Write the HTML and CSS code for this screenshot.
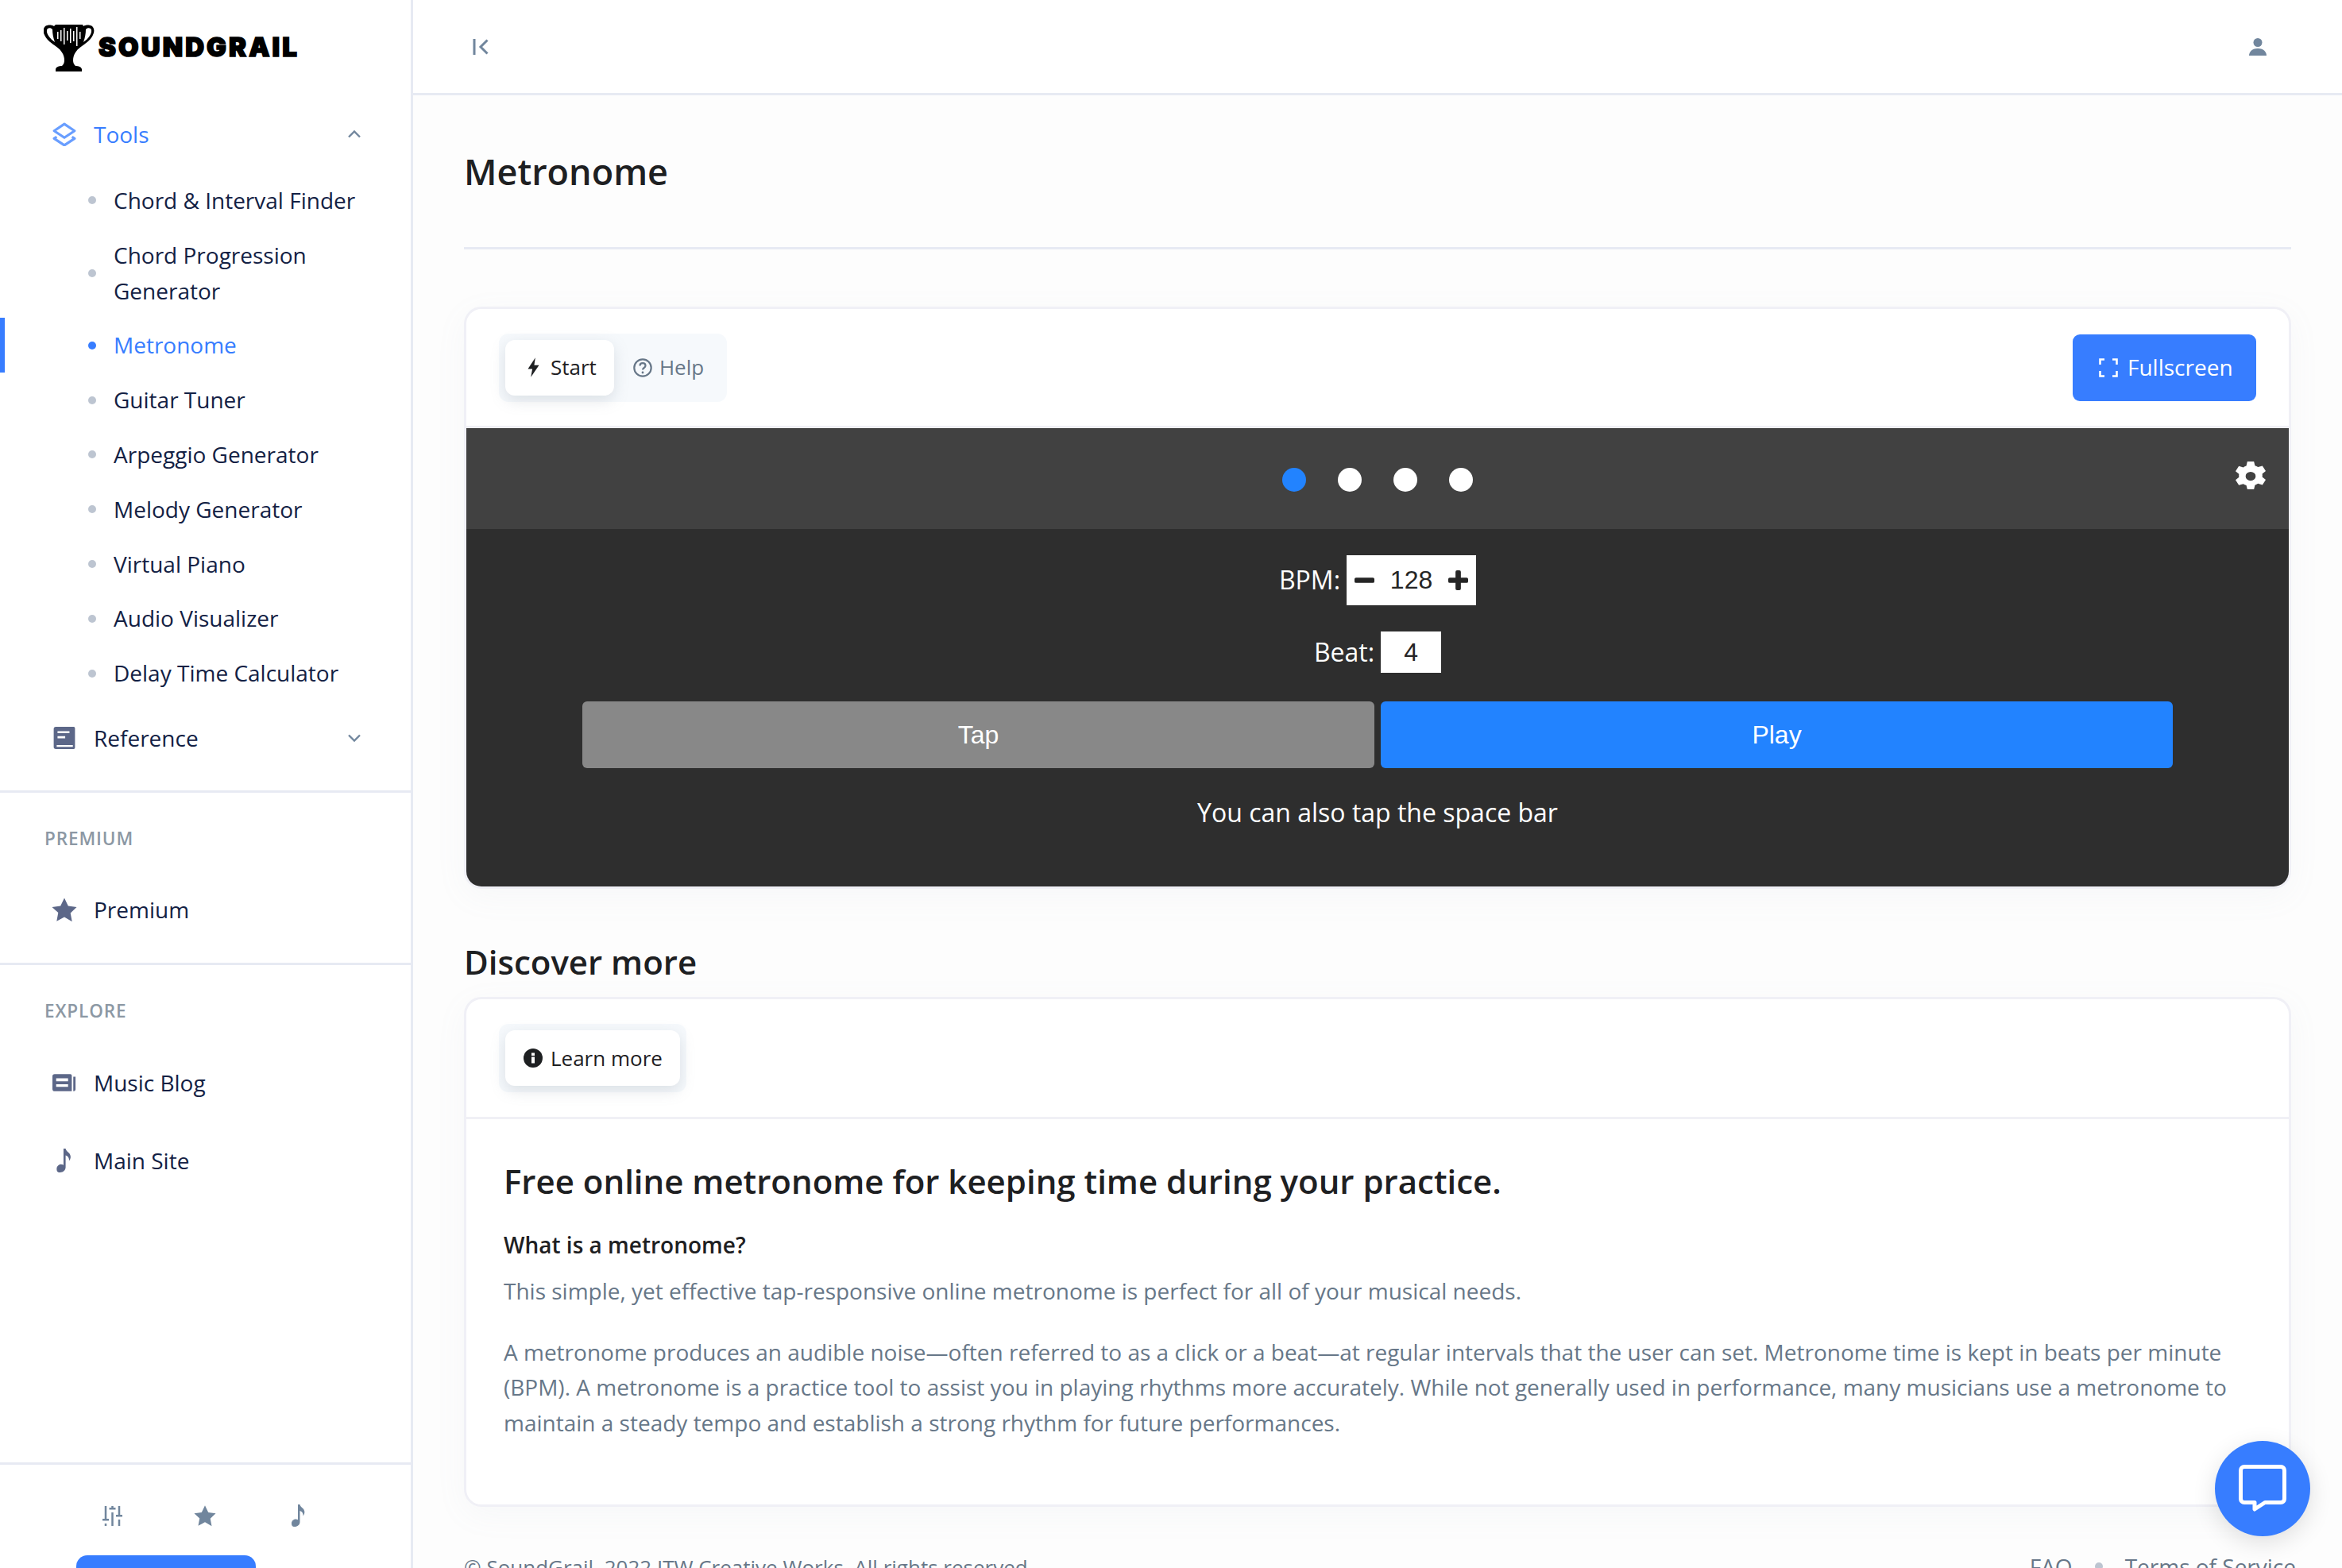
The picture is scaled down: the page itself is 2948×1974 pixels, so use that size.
FILE: index.html
```html
<!DOCTYPE html>
<html lang="en">
<head>
<meta charset="utf-8">
<title>Metronome</title>
<link rel="stylesheet" href="styles.css">
</head>
<body>
<div class="app">
  <aside class="sidebar">
    <div class="brand">
      <svg class="trophy" viewBox="0 0 64 60" aria-hidden="true">
        <path fill="#000" d="M15 1h34l1 2c3-2 8-2 11 0 3 3 3 7 1 11-2 5-7 9-11 12-3 2-8 5-11 10-2 3-3 6-3 10 0 3 1 5 3 7 4 0 7 1 8 4v3H15v-3c1-3 4-4 8-4 2-2 3-4 3-7 0-4-1-7-3-10-3-5-8-8-11-10C8 23 3 19 1 14-1 10-1 6 2 3c3-2 8-2 11 0zM5 6c-2 2-1 6 1 9 2 3 5 6 8 8-2-5-3-11-3-16-2-2-4-2-6-1zm54 0c-2-1-4-1-6 1 0 5-1 11-3 16 3-2 6-5 8-8 2-3 3-7 1-9z"/>
        <g fill="#fff"><rect x="17" y="10" width="1.5" height="9"/><rect x="21" y="8" width="1.5" height="14"/><rect x="25" y="5" width="1.5" height="21"/><rect x="29" y="9" width="1.5" height="12"/><rect x="33" y="6" width="1.5" height="18"/><rect x="37" y="9" width="1.5" height="13"/><rect x="41" y="4" width="1.5" height="24"/><rect x="45" y="10" width="1.5" height="9"/></g>
      </svg>
      <span class="wordmark">SOUNDGRAIL</span>
    </div>

    <nav class="nav-main">
      <a class="nav-item is-open">
        <svg class="nav-icon" viewBox="0 0 28 28" aria-hidden="true"><path fill="none" stroke="#377dff" stroke-opacity=".75" stroke-width="3" stroke-linejoin="round" d="M14 2 26 10 14 18 2 10z"/><path fill="none" stroke="#377dff" stroke-opacity=".75" stroke-width="3" stroke-linejoin="round" d="M5 17 2 19l12 8 12-8-3-2"/></svg>
        <span class="nav-label">Tools</span>
        <svg class="chev" viewBox="0 0 16 10" aria-hidden="true"><path fill="none" stroke="#71869d" stroke-width="2.4" d="M1 8.500l7-7 7 7"/></svg>
      </a>
      <ul class="sublist">
        <li class="sub-item">Chord &amp; Interval Finder</li>
        <li class="sub-item">Chord Progression<br>Generator</li>
        <li class="sub-item is-active">Metronome</li>
        <li class="sub-item">Guitar Tuner</li>
        <li class="sub-item">Arpeggio Generator</li>
        <li class="sub-item">Melody Generator</li>
        <li class="sub-item">Virtual Piano</li>
        <li class="sub-item">Audio Visualizer</li>
        <li class="sub-item">Delay Time Calculator</li>
      </ul>
      <a class="nav-item nav-ref">
        <svg class="nav-icon" viewBox="0 0 28 28" aria-hidden="true"><path fill="#5c6788" d="M4 1h21a1.500 1.500 0 0 1 1.500 1.500v23a1.500 1.500 0 0 1-1.500 1.500H4a2.500 2.500 0 0 1-2.500-2.500v-21A2.500 2.500 0 0 1 4 1z"/><path fill="#fff" d="M6 6h14v2.500H6zM6 12h9v2.500H6zM5 22.500h19V24.500H5z"/></svg>
        <span class="nav-label">Reference</span>
        <svg class="chev" viewBox="0 0 16 10" aria-hidden="true"><path fill="none" stroke="#71869d" stroke-width="2.4" d="M1 1.500l7 7 7-7"/></svg>
      </a>
    </nav>

    <section class="nav-section">
      <h3 class="nav-heading">PREMIUM</h3>
      <a class="nav-item">
        <svg class="nav-icon" viewBox="0 0 32 30" aria-hidden="true"><path fill="#5c6788" d="M16 .5l4.800 10 10.700 1.400-7.800 7.500 2 10.800L16 24.500 6.300 29.700l2-10.800L.5 11.900l10.700-1.400z"/></svg>
        <span class="nav-label">Premium</span>
      </a>
    </section>

    <section class="nav-section nav-section-last">
      <h3 class="nav-heading">EXPLORE</h3>
      <a class="nav-item">
        <svg class="nav-icon icon-blog" viewBox="0 0 32 24" aria-hidden="true"><path fill="#5c6788" d="M3 .5h21a2 2 0 0 1 2 2v21H3a3 3 0 0 1-3-3V3.500a3 3 0 0 1 3-3zM28 4h3v17a2.500 2.500 0 0 1-2.500 2.500H28z"/><path fill="#fff" d="M5 6h16v4H5zM5 14h16v3.500H5z"/></svg>
        <span class="nav-label">Music Blog</span>
      </a>
      <a class="nav-item">
        <svg class="nav-icon" viewBox="0 0 28 28" aria-hidden="true"><path fill="#5c6788" d="M13 0h2.500c.5 3 3.500 4 5 6.500 1.500 2.500 1 6-1 8 .5-3-1-5.500-4-6.500v14c0 3.500-3 6-6.500 6S5 26 5 23.500 7.500 18.500 10 18.500c1.200 0 2.300.3 3 .8z"/></svg>
        <span class="nav-label">Main Site</span>
      </a>
    </section>

    <div class="side-foot">
      <div class="foot-icons">
        <svg class="foot-icon foot-sliders" viewBox="0 0 25 25" aria-hidden="true"><g fill="#71869d"><rect x="2.750" y="0" width="2.500" height="16"/><rect x="0" y="16" width="8" height="2.500"/><rect x="2.750" y="22" width="2.500" height="3"/><rect x="11.250" y="0" width="2.500" height="2"/><rect x="8.500" y="2" width="8" height="2.500"/><rect x="11.250" y="8" width="2.500" height="17"/><rect x="19.750" y="0" width="2.500" height="11"/><rect x="17" y="11" width="8" height="2.500"/><rect x="19.750" y="17" width="2.500" height="8"/></g></svg>
        <svg class="foot-icon" viewBox="0 0 32 30" aria-hidden="true"><path fill="#71869d" d="M16 .5l4.800 10 10.700 1.400-7.800 7.500 2 10.800L16 24.500 6.300 29.700l2-10.800L.5 11.900l10.700-1.400z"/></svg>
        <svg class="foot-icon" viewBox="0 0 28 28" aria-hidden="true"><path fill="#71869d" d="M13 0h2.500c.5 3 3.500 4 5 6.500 1.500 2.500 1 6-1 8 .5-3-1-5.500-4-6.500v14c0 3.500-3 6-6.500 6S5 26 5 23.500 7.500 18.500 10 18.500c1.200 0 2.300.3 3 .8z"/></svg>
      </div>
      <div class="foot-btn"></div>
    </div>
  </aside>

  <div class="main">
    <header class="topbar">
      <svg class="collapse" viewBox="0 0 20 20" aria-hidden="true"><path fill="none" stroke="#71869d" stroke-width="3" d="M2 0v20M18.500 1.500 10 10l8.500 8.500"/></svg>
      <svg class="user" viewBox="0 0 22 22" aria-hidden="true"><circle cx="11" cy="5.500" r="5.500" fill="#71869d"/><path fill="#71869d" d="M0 22c0-4 3-9 11-9s11 5 11 9z"/></svg>
    </header>

    <main class="content">
      <h1 class="page-title">Metronome</h1>

      <section class="card card-tool">
        <div class="card-head">
          <div class="tabs">
            <span class="tab is-current">
              <svg class="tab-icon" viewBox="0 0 16 26" aria-hidden="true"><path fill="#1e2022" d="M10.500 0 .5 15h6L4.500 26l11-16H9z"/></svg>Start
            </span>
            <span class="tab tab-muted">
              <svg class="tab-icon tab-icon-help" viewBox="0 0 24 24" aria-hidden="true"><circle cx="12" cy="12" r="10.700" fill="none" stroke="#677788" stroke-width="2.200"/><path fill="none" stroke="#677788" stroke-width="2.200" d="M8.500 9.500c0-2 1.500-3.300 3.500-3.300s3.500 1.300 3.500 3.200c0 2.600-3.500 2.600-3.500 5.200"/><circle cx="12" cy="18" r="1.400" fill="#677788"/></svg>Help
            </span>
          </div>
          <a class="btn-full">
            <svg class="full-icon" viewBox="0 0 24 24" aria-hidden="true"><path fill="none" stroke="#fff" stroke-width="2.600" d="M1.500 8V1.500H7M17 1.500h5.500V8M22.500 16v6.500H17M7 22.500H1.500V16"/></svg>Fullscreen
          </a>
        </div>

        <div class="metro">
          <div class="metro-top">
            <span class="dot dot-on"></span><span class="dot"></span><span class="dot"></span><span class="dot"></span>
            <svg class="gear" viewBox="1.500 .5 21 23.500" preserveAspectRatio="none" aria-hidden="true"><path fill="#fff" fill-rule="evenodd" d="M9.700 0h4.600l.7 3.200c.8.300 1.500.7 2.100 1.200l3.100-1 2.300 4-2.400 2.200c.1.800.1 1.600 0 2.400l2.400 2.200-2.300 4-3.100-1c-.6.500-1.300.9-2.100 1.200l-.7 3.200H9.700L9 18.600c-.8-.3-1.500-.7-2.100-1.200l-3.100 1-2.300-4 2.400-2.200c-.1-.8-.1-1.600 0-2.400L1.500 7.600l2.300-4 3.100 1C7.500 4.100 8.200 3.700 9 3.400zM12 8a3.500 3.500 0 1 0 0 7 3.500 3.500 0 0 0 0-7z" transform="translate(0 .5)"/></svg>
          </div>
          <div class="metro-body">
            <div class="row row-bpm">
              <span class="row-label">BPM:</span>
              <span class="stepper">
                <svg class="step-icon" viewBox="0 0 26 26" aria-hidden="true"><rect y="9.500" width="26" height="7" rx="2" fill="#252525"/></svg>
                <span class="num">128</span>
                <svg class="step-icon" viewBox="0 0 26 26" aria-hidden="true"><path fill="#252525" d="M9.500 2a2 2 0 0 1 2-2h3a2 2 0 0 1 2 2v7.500H24a2 2 0 0 1 2 2v3a2 2 0 0 1-2 2h-7.500V24a2 2 0 0 1-2 2h-3a2 2 0 0 1-2-2v-7.500H2a2 2 0 0 1-2-2v-3a2 2 0 0 1 2-2h7.500z"/></svg>
              </span>
            </div>
            <div class="row row-beat">
              <span class="row-label">Beat:</span>
              <span class="beat-box">4</span>
            </div>
            <div class="actions">
              <span class="action action-tap">Tap</span>
              <span class="action action-play">Play</span>
            </div>
            <p class="hint">You can also tap the space bar</p>
          </div>
        </div>
      </section>

      <h2 class="section-title">Discover more</h2>

      <section class="card card-info">
        <div class="card-head card-head-learn">
          <div class="tabs">
            <span class="tab tab-learn is-current">
              <svg class="tab-icon tab-icon-info" viewBox="0 0 24 24" aria-hidden="true"><circle cx="12" cy="12" r="12" fill="#1e2022"/><rect x="10" y="10.500" width="4" height="8" fill="#fff"/><rect x="10" y="5.500" width="4" height="3.500" fill="#fff"/></svg>Learn more
            </span>
          </div>
        </div>
        <div class="card-text">
          <h2 class="info-title">Free online metronome for keeping time during your practice.</h2>
          <h3 class="info-sub">What is a metronome?</h3>
          <p class="info-p">This simple, yet effective tap-responsive online metronome is perfect for all of your musical needs.</p>
          <p class="info-p">A metronome produces an audible noise—often referred to as a click or a beat—at regular intervals that the user can set. Metronome time is kept in beats per minute (BPM). A metronome is a practice tool to assist you in playing rhythms more accurately. While not generally used in performance, many musicians use a metronome to maintain a steady tempo and establish a strong rhythm for future performances.</p>
        </div>
      </section>

      <footer class="page-foot">
        <span>© SoundGrail, 2022 ITW Creative Works. All rights reserved.</span>
        <span class="foot-links"><span>FAQ</span><i class="foot-dot"></i><span>Terms of Service</span></span>
      </footer>
    </main>
  </div>
</div>

<a class="chat">
  <svg class="chat-icon" viewBox="0 0 60 60" aria-hidden="true"><path fill="none" stroke="#fff" stroke-width="5" stroke-linejoin="round" d="M7 2.500h46a4.500 4.500 0 0 1 4.500 4.500v36a4.500 4.500 0 0 1-4.500 4.500H33L20 56v-8.500H7A4.500 4.500 0 0 1 2.500 43V7A4.500 4.500 0 0 1 7 2.500z"/></svg>
</a>
</body>
</html>
```

FILE: styles.css
```css
* { box-sizing: border-box; }
html, body { margin: 0; height: 100%; overflow: hidden; }
body { font-family: "Open Sans", "Liberation Sans", sans-serif; font-size: 28px; line-height: 44.800px; color: #1e2022; background: #fff; }
h1, h2, h3, p, ul { margin: 0; padding: 0; }
ul { list-style: none; }

.app { display: flex; height: 1974px; overflow: hidden; }

/* sidebar */
.sidebar { width: 520px; flex: none; height: 1974px; display: flex; flex-direction: column; border-right: 3px solid #e7eaf3; background: #fff; overflow: hidden; }
.brand { height: 120px; padding: 30px 0 0 55px; display: flex; align-items: flex-start; }
.trophy { width: 64px; height: 60px; flex: none; }
.wordmark { font-family: Inter, "DejaVu Sans", sans-serif; font-weight: 900; font-size: 33px; line-height: 40px; margin: 9px 0 0 5px; color: #000; letter-spacing: 3.100px; -webkit-text-stroke: 1.600px #000; }
.nav-item { display: flex; align-items: center; height: 98px; padding: 0 63px 0 62px; color: #132144; }
.nav-icon { width: 38px; height: 30px; flex: none; }
.icon-blog { width: 30px; height: 24px; margin: 0 4px; }
.nav-label { margin-left: 18px; flex: 1; }
.is-open { color: #377dff; }
.chev { width: 16px; height: 10px; flex: none; }
.sub-item { position: relative; padding: 12px 20px 12px 143px; color: #132144; }
.sub-item::before { content: ""; position: absolute; left: 111px; top: 50%; width: 10px; height: 10px; margin-top: -5px; border-radius: 50%; background: #bdc5d1; }
.sub-item.is-active { color: #377dff; }
.sub-item.is-active::before { background: #377dff; }
.sub-item.is-active::after { content: ""; position: absolute; left: 0; top: 0; bottom: 0; width: 6px; background: #377dff; }
.nav-ref { margin-top: -2px; }
.nav-main { padding-bottom: 17px; border-bottom: 3px solid #e7eaf3; }
.nav-section { padding-bottom: 18px; border-bottom: 3px solid #e7eaf3; }
.nav-section-last { border-bottom: 0; padding-bottom: 0; }
.nav-section-last .nav-heading { margin-bottom: 24px; }
.nav-heading { font-size: 22.500px; line-height: 34px; font-weight: 600; letter-spacing: 0.900px; color: #8c98a4; padding: 41px 0 0 56px; margin-bottom: 23px; }
.side-foot { margin-top: auto; height: 133px; flex: none; border-top: 3px solid #e7eaf3; position: relative; }
.foot-icons { display: flex; justify-content: center; align-items: center; gap: 90px; padding: 14px 0 0 2px; height: 114px; }
.foot-icon { width: 28px; height: 28px; flex: none; }
.foot-sliders { width: 25px; height: 25px; }
.foot-btn { width: 226px; height: 90px; margin-left: 96px; border-radius: 14px; background: #377dff; }

/* main */
.main { flex: 1; min-width: 0; height: 1974px; background: #fdfdfd; overflow: hidden; }
.topbar { height: 120px; display: flex; align-items: center; justify-content: space-between; padding: 0 95px 0 75px; background: #fff; border-bottom: 3px solid #e7eaf3; }
.collapse { width: 20px; height: 20px; }
.user { width: 22px; height: 22px; }
.content { padding: 0 64px; }
.page-title { font-size: 45px; line-height: 72px; font-weight: 600; color: #1e2022; padding: 60px 0 59px; border-bottom: 3px solid #e7eaf3; margin-bottom: 72px; }

.card { background: #fff; border: 3px solid #f0f0f6; border-radius: 22px; box-shadow: 0 10px 40px rgba(140, 152, 164, 0.06); }
.card-tool { height: 733px; overflow: hidden; }
.card-head { display: flex; justify-content: space-between; align-items: center; height: 150px; padding: 0 41px; border-bottom: 3px solid #f0f0f6; }
.tabs { display: inline-flex; padding: 8px; background: #f6f9fc; border-radius: 12px; }
.tab { display: inline-flex; align-items: center; height: 70px; padding: 0 22px 0 28px; font-size: 26px; border-radius: 12px; color: #1e2022; }
.tab.is-current { background: #fff; box-shadow: 0 6px 18px rgba(140, 152, 164, 0.25); }
.tab-muted { color: #677788; padding: 0 21px 0 24px; }
.tab-learn { padding-left: 23px; }
.tab-icon { width: 15px; height: 25px; margin-right: 14px; flex: none; }
.tab-icon-help { width: 24px; height: 24px; margin-right: 9px; }
.tab-icon-info { width: 24px; height: 24px; margin-right: 10px; }
.btn-full { display: flex; align-items: center; width: 231px; height: 84px; padding-left: 33px; border-radius: 9px; background: #377dff; color: #fff; font-size: 28px; }
.full-icon { width: 24px; height: 24px; margin-right: 12px; flex: none; }

.metro-top { position: relative; height: 127px; background: #414141; display: flex; justify-content: center; align-items: flex-start; gap: 40px; padding-top: 50px; }
.dot { width: 30px; height: 30px; border-radius: 50%; background: #fff; }
.dot-on { background: #2283ff; }
.gear { position: absolute; right: 29px; top: 42px; width: 38px; height: 38px; }
.metro-body { height: 451px; background: #2e2e2e; display: flex; flex-direction: column; align-items: center; padding-top: 33px; color: #fff; }
.row { display: flex; align-items: center; justify-content: center; }
.row-label { margin-right: 8px; font-size: 32px; }
.stepper { display: flex; align-items: center; justify-content: space-between; width: 163px; height: 63px; padding: 0 10px; background: #fff; color: #252525; }
.step-icon { width: 25px; height: 25px; flex: none; }
.num { font-family: "Liberation Sans", Arial, sans-serif; font-size: 32px; }
.row-beat { margin-top: 33px; }
.beat-box { width: 76px; height: 52px; display: flex; align-items: center; justify-content: center; background: #fff; color: #252525; font-family: "Liberation Sans", Arial, sans-serif; font-size: 32px; }
.actions { display: flex; gap: 8px; margin-top: 36px; }
.action { width: 997px; height: 84px; display: flex; align-items: center; justify-content: center; border-radius: 6px; font-family: "Liberation Sans", Arial, sans-serif; font-size: 32px; color: #fff; }
.action-tap { background: #888; }
.action-play { background: #2283ff; }
.hint { margin-top: 32px; font-size: 32px; line-height: 48px; }

.section-title { font-size: 42px; line-height: 63px; font-weight: 600; padding: 60px 0 13px; color: #1e2022; }
.card-head-learn { height: 151px; }
.card-text { padding: 46px 47px 0; height: 485px; }
.info-title { font-size: 42px; line-height: 63px; font-weight: 600; color: #1e2022; margin-bottom: 27px; }
.info-sub { font-size: 28px; line-height: 44.800px; font-weight: 600; color: #1e2022; margin-bottom: 13px; }
.info-p { font-size: 28px; line-height: 44.800px; color: #677788; margin-bottom: 32px; }

.page-foot { display: flex; justify-content: space-between; align-items: baseline; margin-top: 55px; font-size: 26px; line-height: 40px; color: #677788; }
.foot-links { display: flex; align-items: center; gap: 28px; margin-right: -6px; font-size: 28px; }
.foot-dot { width: 10px; height: 10px; border-radius: 50%; background: #bdc5d1; }

.chat { position: fixed; left: 2788px; top: 1814px; width: 120px; height: 120px; border-radius: 50%; background: #377dff; display: flex; align-items: center; justify-content: center; box-shadow: 0 8px 30px rgba(0, 0, 0, 0.12); }
.chat-icon { width: 60px; height: 60px; }
```
